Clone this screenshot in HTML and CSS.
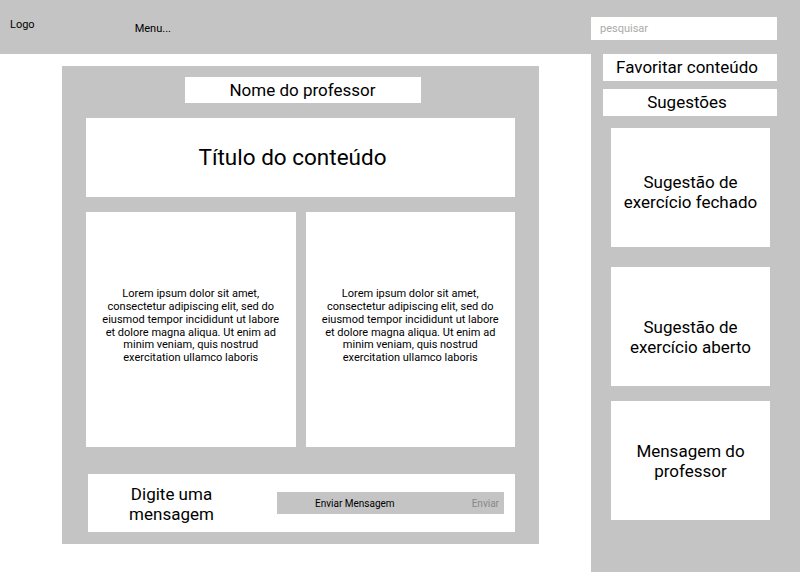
FILE: index.html
```html
<!DOCTYPE html>
<html lang="pt-BR">

<head>
    <meta charset="UTF-8">
    <meta name="viewport" content="width=device-width, initial-scale=1.0">
    <title>Conteúdo</title>
    <link rel="stylesheet" href="styles.css">
</head>

<body>
    <div class="page">
        <div class="left">
            <header class="topbar">
                <span class="logo">Logo</span>
                <span class="menu">Menu...</span>
            </header>

            <main class="panel">
                <div class="teacher">Nome do professor</div>
                <div class="title">Título do conteúdo</div>

                <div class="texts">
                    <div class="text-card">
                        Lorem ipsum dolor sit amet, consectetur adipiscing elit, sed do eiusmod tempor incididunt ut labore et dolore magna aliqua. Ut enim ad minim veniam, quis nostrud exercitation ullamco laboris
                    </div>
                    <div class="text-card">
                        Lorem ipsum dolor sit amet, consectetur adipiscing elit, sed do eiusmod tempor incididunt ut labore et dolore magna aliqua. Ut enim ad minim veniam, quis nostrud exercitation ullamco laboris
                    </div>
                </div>

                <div class="message">
                    <div class="message-label">Digite uma<br>mensagem</div>
                    <div class="message-input">
                        <span class="message-text">Enviar Mensagem</span>
                        <span class="message-send">Enviar</span>
                    </div>
                </div>
            </main>
        </div>

        <aside class="sidebar">
            <input class="search" type="text" placeholder="pesquisar">
            <div class="side-btn">Favoritar conteúdo</div>
            <div class="side-btn side-btn-second">Sugestões</div>
            <div class="suggestion suggestion-first">Sugestão de<br>exercício fechado</div>
            <div class="suggestion suggestion-second">Sugestão de<br>exercício aberto</div>
            <div class="suggestion suggestion-third">Mensagem do<br>professor</div>
        </aside>
    </div>
</body>

</html>
```

FILE: styles.css
```css
body {
    margin: 0;
    font-family: Roboto, "Liberation Sans", sans-serif;
    background-color: #fff;
    color: #000;
}

.page {
    display: flex;
    width: 800px;
    height: 572px;
    overflow: hidden;
}

.left {
    width: 591px;
    flex-shrink: 0;
}

.topbar {
    height: 54px;
    background-color: #c4c4c4;
    display: flex;
    align-items: flex-start;
    font-size: 11px;
}

.logo {
    margin-left: 10px;
    margin-top: 18px;
}

.menu {
    margin-left: 100px;
    margin-top: 22px;
}

.panel {
    margin: 12px 0 0 62px;
    width: 477px;
    height: 478px;
    box-sizing: border-box;
    padding: 11px 24px 0 24px;
    background-color: #c4c4c4;
    display: flex;
    flex-direction: column;
}

.teacher {
    align-self: center;
    width: 236px;
    height: 26px;
    margin-left: 4px;
    background-color: #fff;
    font-size: 17px;
    display: flex;
    align-items: center;
    justify-content: center;
}

.title {
    margin-top: 15px;
    height: 79px;
    box-sizing: border-box;
    padding: 0 16px 2px 0;
    background-color: #fff;
    font-size: 22.5px;
    display: flex;
    align-items: center;
    justify-content: center;
}

.texts {
    margin-top: 15px;
    height: 235px;
    display: flex;
    gap: 10px;
}

.text-card {
    flex: 1;
    background-color: #fff;
    box-sizing: border-box;
    padding: 0 13px 6px 13px;
    font-size: 11px;
    line-height: 12.8px;
    text-align: center;
    display: flex;
    align-items: center;
    justify-content: center;
}

.message {
    margin-top: 27px;
    margin-left: 2px;
    height: 58px;
    background-color: #fff;
    display: flex;
    align-items: center;
}

.message-label {
    width: 167px;
    font-size: 17px;
    line-height: 20px;
    text-align: center;
    margin-top: 2px;
}

.message-input {
    margin-left: 22px;
    width: 227px;
    height: 22px;
    background-color: #c4c4c4;
    display: flex;
    align-items: center;
    justify-content: space-between;
    font-size: 10px;
}

.message-text {
    margin-left: 38px;
}

.message-send {
    margin-right: 5px;
    color: #888;
}

.sidebar {
    flex: 1;
    background-color: #c4c4c4;
    display: flex;
    flex-direction: column;
    align-items: flex-start;
}

.search {
    margin-top: 17px;
    width: 186px;
    height: 23px;
    box-sizing: border-box;
    border: none;
    outline: none;
    padding: 0 9px;
    font-family: Roboto, "Liberation Sans", sans-serif;
    font-size: 11px;
    background-color: #fff;
}

.search::placeholder {
    color: #aaa;
}

.side-btn {
    margin-top: 14px;
    margin-left: 12px;
    width: 174px;
    height: 27px;
    box-sizing: border-box;
    padding: 0 6px 2px 0;
    background-color: #fff;
    font-size: 17px;
    display: flex;
    align-items: center;
    justify-content: center;
}

.side-btn-second {
    margin-top: 8px;
}

.suggestion {
    margin-left: 20px;
    width: 159px;
    height: 119px;
    box-sizing: border-box;
    background-color: #fff;
    font-size: 17px;
    line-height: 20px;
    text-align: center;
    display: flex;
    align-items: center;
    justify-content: center;
}

.suggestion-first {
    margin-top: 12px;
    padding-top: 8px;
}

.suggestion-second {
    margin-top: 20px;
    padding-top: 20px;
}

.suggestion-third {
    margin-top: 15px;
}
```
